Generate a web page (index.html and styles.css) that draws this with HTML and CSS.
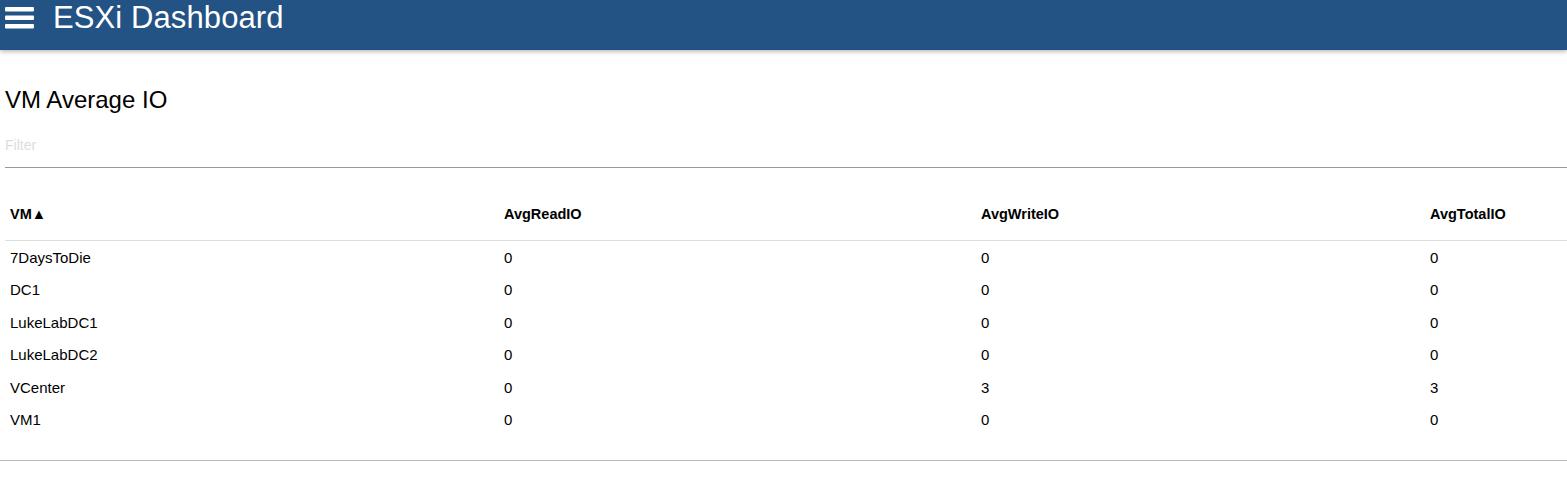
FILE: index.html
```html
<!DOCTYPE html>
<html>
<head>
<meta charset="utf-8">
<link rel="stylesheet" href="styles.css">
</head>
<body>
<header class="topbar">
  <svg class="menu" width="29" height="24" viewBox="0 0 29 24"><rect x="0" y="1" width="29" height="4.5" rx="1" fill="#fff"/><rect x="0" y="9.5" width="29" height="4.5" rx="1" fill="#fff"/><rect x="0" y="18" width="29" height="4.5" rx="1" fill="#fff"/></svg>
  <span class="title">ESXi Dashboard</span>
</header>
<main class="card">
  <h1 class="heading">VM Average IO</h1>
  <input class="filter" type="text" placeholder="Filter">
  <table class="grid">
    <colgroup><col class="c1"><col class="c2"><col class="c3"><col class="c4"></colgroup>
    <thead>
      <tr><th>VM&#9650;</th><th>AvgReadIO</th><th>AvgWriteIO</th><th>AvgTotalIO</th></tr>
    </thead>
    <tbody>
      <tr><td>7DaysToDie</td><td>0</td><td>0</td><td>0</td></tr>
      <tr><td>DC1</td><td>0</td><td>0</td><td>0</td></tr>
      <tr><td>LukeLabDC1</td><td>0</td><td>0</td><td>0</td></tr>
      <tr><td>LukeLabDC2</td><td>0</td><td>0</td><td>0</td></tr>
      <tr><td>VCenter</td><td>0</td><td>3</td><td>3</td></tr>
      <tr><td>VM1</td><td>0</td><td>0</td><td>0</td></tr>
    </tbody>
  </table>
</main>
</body>
</html>
```

FILE: styles.css
```css
html, body { margin: 0; padding: 0; background: #fff; }
body { font-family: "Liberation Sans", Arial, sans-serif; color: #000; }
.topbar {
  height: 50px;
  background: #235284;
  display: flex;
  align-items: center;
  box-shadow: 0 2px 4px rgba(0,0,0,0.25);
  padding-bottom: 14px;
  box-sizing: border-box;
}
.menu { margin-left: 5px; }
.title { color: #fff; font-size: 31px; margin-left: 19px; line-height: 36px; letter-spacing: 0.1px; }
.card {
  padding: 0 0 24px 5px;
  box-shadow: 0 1px 2px rgba(0,0,0,0.35);
  border-bottom: 1px solid #bbb;
}
.heading { font-size: 24px; font-weight: normal; margin: 0; padding-top: 36px; line-height: 28px; }
.filter {
  display: block;
  width: 100%;
  box-sizing: border-box;
  border: none;
  border-bottom: 1px solid #999;
  font-family: inherit;
  font-size: 14px;
  padding: 0 0 12px 0;
  margin-top: 21px;
  height: 33px;
  outline: none;
}
.filter::placeholder { color: #ddd; }
.grid { width: 100%; border-collapse: collapse; margin-top: 18px; table-layout: fixed; font-size: 15px; }
.c1 { width: 494px; } .c2 { width: 477px; } .c3 { width: 449px; }
.grid th { text-align: left; font-weight: bold; font-size: 14.5px; line-height: 16px; padding: 20px 5px 18px 5px; border-bottom: 1px solid #ddd; }
.grid td { padding: 0 5px; height: 32.5px; }
```
